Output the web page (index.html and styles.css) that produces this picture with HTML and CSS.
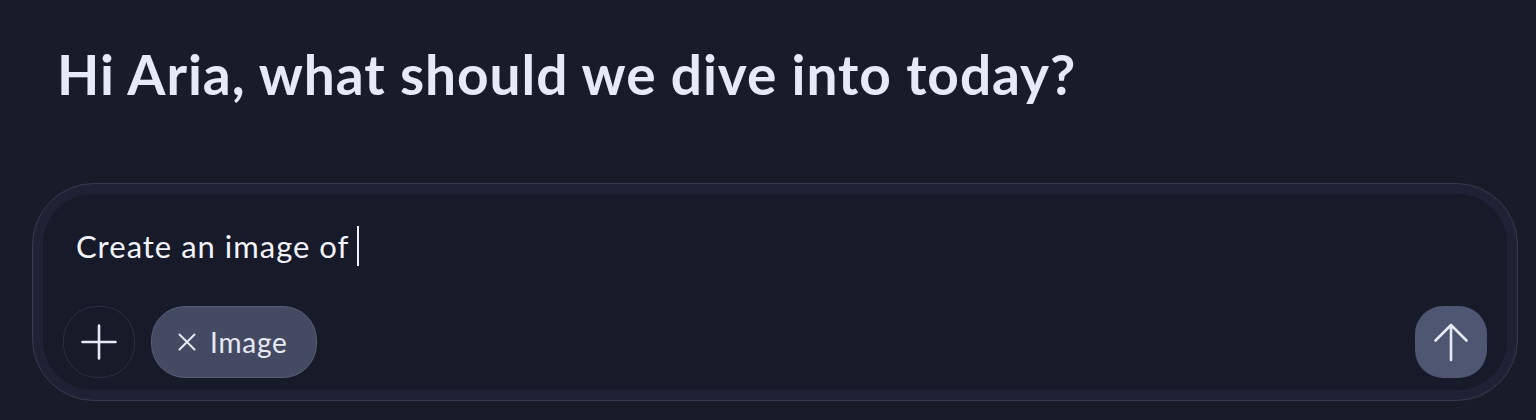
FILE: index.html
```html
<!DOCTYPE html>
<html lang="en">
<head>
<meta charset="utf-8">
<title>Chat</title>
<link rel="stylesheet" href="styles.css">
</head>
<body>
<main class="page">
  <h1 class="greeting">Hi Aria, what should we dive into today?</h1>
  <div class="composer">
    <div class="composer-inner">
      <div class="prompt">Create an image of<span class="caret"></span></div>
      <div class="toolbar">
        <div class="tools-left">
          <button class="icon-btn plus-btn" aria-label="Add">
            <svg width="36" height="36" viewBox="0 0 36 36" fill="none" stroke="#e6e9f6" stroke-width="2.6" stroke-linecap="round"><path d="M18 1.5V34.5M1.5 18H34.5"/></svg>
          </button>
          <span class="chip">
            <svg class="chip-x" width="18" height="18" viewBox="0 0 18 18" fill="none" stroke="#e6e9f6" stroke-width="2" stroke-linecap="round"><path d="M1.5 1.5L16.5 16.5M16.5 1.5L1.5 16.5"/></svg>
            <span class="chip-label">Image</span>
          </span>
        </div>
        <button class="icon-btn send-btn" aria-label="Send">
          <svg width="36" height="40" viewBox="0 0 36 40" fill="none" stroke="#e6e9f6" stroke-width="2.6" stroke-linecap="round" stroke-linejoin="round"><path d="M18 38V3M2.5 18.5L18 3L33.5 18.5"/></svg>
        </button>
      </div>
    </div>
  </div>
</main>
</body>
</html>
```
FILE: styles.css
```css
* { box-sizing: border-box; }
html, body {
  margin: 0;
  padding: 0;
  background: #181b28;
  height: 100%;
}
body {
  font-family: "Lato", "Inter", sans-serif;
  color: #e6e9f6;
  overflow: hidden;
}
.page {
  padding: 39px 18px 0 32px;
}
.greeting {
  margin: 0 0 0 25px;
  font-size: 55px;
  font-weight: 700;
  line-height: 70px;
  color: #e6e9f6;
  letter-spacing: 0.95px;
}
.composer {
  margin-top: 74px;
  width: 1486px;
  border: 1px solid #383c52;
  background: #1e2234;
  border-radius: 62px;
  padding: 10px;
}
.composer-inner {
  background: #161a29;
  border-radius: 50px;
  padding: 30px 20px 12px 20px;
}
.prompt {
  padding-left: 13px;
  font-size: 31px;
  line-height: 40px;
  letter-spacing: 1px;
  color: #f2f3fa;
  display: flex;
  align-items: center;
  height: 44px;
}
.caret {
  display: inline-block;
  width: 2px;
  height: 40px;
  background: #f2f3fa;
  margin-left: 8px;
}
.toolbar {
  margin-top: 38px;
  display: flex;
  justify-content: space-between;
  align-items: center;
}
.tools-left {
  display: flex;
  gap: 16px;
  align-items: center;
}
.icon-btn {
  width: 72px;
  height: 72px;
  padding: 0;
  display: flex;
  align-items: center;
  justify-content: center;
  cursor: pointer;
}
.plus-btn {
  background: #161a29;
  border: 1px solid #2b2f42;
  border-radius: 34px;
}
.send-btn {
  background: #4f5672;
  border: none;
  border-radius: 28px;
}
.chip {
  height: 72px;
  display: inline-flex;
  align-items: center;
  gap: 14px;
  padding: 0 28px 0 26px;
  background: #454a63;
  border: 1px solid #585d76;
  border-radius: 34px;
}
.chip-label {
  font-size: 28px;
  letter-spacing: 0.8px;
  color: #e6e9f6;
  font-family: "Lato", "Inter", sans-serif;
}
```
